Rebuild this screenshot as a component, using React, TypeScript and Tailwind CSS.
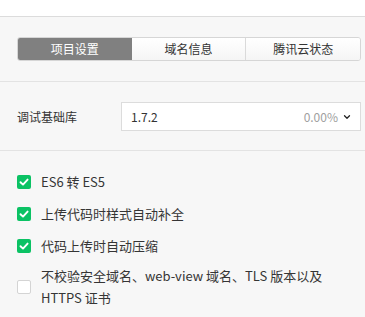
import { ChevronDown } from "lucide-react";

const TABS = ["项目设置", "域名信息", "腾讯云状态"];

const OPTIONS: { label: string; checked: boolean }[] = [
  { label: "ES6 转 ES5", checked: true },
  { label: "上传代码时样式自动补全", checked: true },
  { label: "代码上传时自动压缩", checked: true },
  { label: "不校验安全域名、web-view 域名、TLS 版本以及 HTTPS 证书", checked: false },
];

function Check({ checked }: { checked: boolean }) {
  if (!checked) {
    return <span className="size-[14px] shrink-0 rounded-[2px] border border-[#d4d4d4] bg-white" />;
  }
  return (
    <span className="flex size-[14px] shrink-0 items-center justify-center rounded-[2px] bg-[#0bc264]">
      <svg viewBox="0 0 14 14" className="size-[14px]" aria-hidden>
        <path d="M3.5 7.2 L6 9.6 L10.6 4.6" fill="none" stroke="white" strokeWidth="1.9" strokeLinecap="round" strokeLinejoin="round" />
      </svg>
    </span>
  );
}

export default function App() {
  return (
    <div
      className="h-[317px] w-[365px] overflow-hidden bg-[#f7f7f7] text-[#353535]"
      style={{ fontFamily: '"Noto Sans CJK SC", "Noto Sans", sans-serif' }}
    >
      <div className="h-[17px] border-b border-[#dcdcdc] bg-white" />

      <div className="border-b border-[#e3e3e3] pt-[20px] pr-[4px] pb-[20px] pl-[17px]">
        <div className="flex h-[24px] overflow-hidden rounded-[3px] border border-[#d6d6d6] text-[12px] leading-none">
          {TABS.map((t, i) => (
            <div
              key={t}
              className={[
                "flex flex-1 items-center justify-center",
                i === 0
                  ? "bg-[#808080] text-white"
                  : "bg-gradient-to-b from-white to-[#f5f5f5] text-[#333]",
                i === 2 ? "border-l border-[#dadada]" : "",
              ].join(" ")}
            >
              {t}
            </div>
          ))}
        </div>
      </div>

      <div className="flex items-center border-b border-[#e3e3e3] pt-[20px] pr-[4px] pb-[19px] pl-[17px]">
        <span className="w-[104px] text-[12px] text-[#333]">调试基础库</span>
        <div className="flex h-[29px] flex-1 items-center border border-[#dcdcdc] bg-white pl-[9px] pr-[8px] text-[12px]">
          <span className="flex-1 text-[#333]">1.7.2</span>
          <span className="text-[#a0a0a0]">0.00%</span>
          <ChevronDown className="ml-[4px] size-[10px] text-[#222]" strokeWidth={3} aria-hidden />
        </div>
      </div>

      <div className="flex flex-col pt-[15px] pl-[17px] pr-[20px] text-[13px] leading-[22px]">
        {OPTIONS.map((o, i) => (
          <div key={o.label} className={["flex items-center gap-[10px] py-[5px]", i === 3 ? "pt-[3px]" : ""].join(" ")}>
            <Check checked={o.checked} />
            <span className={i === 3 ? "w-[290px]" : ""}>{o.label}</span>
          </div>
        ))}
      </div>
    </div>
  );
}
